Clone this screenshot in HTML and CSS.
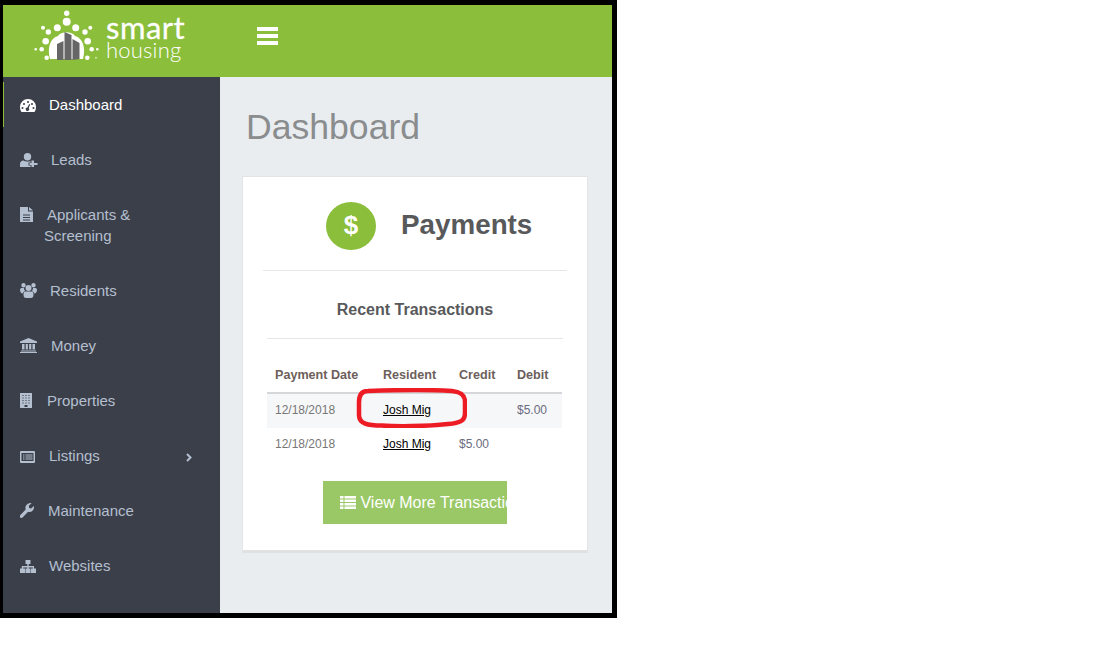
FILE: index.html
```html
<!DOCTYPE html>
<html lang="en">
<head>
    <meta charset="UTF-8">
    <title>Dashboard - Smart Housing</title>
    <link rel="stylesheet" href="styles.css">
</head>
<body>
    <div class="frame">
        <header class="topbar">
            <div class="logo">
                <svg class="logo-mark" width="66" height="52" viewBox="0 0 66 52">
                    <g fill="#fff">
                        <circle cx="33.700" cy="3.300" r="2.700"/><circle cx="33.700" cy="11.700" r="4"/>
                        <circle cx="24.300" cy="17.700" r="3.500"/><circle cx="42.700" cy="17.700" r="3.500"/>
                        <circle cx="15.300" cy="22" r="2.700"/><circle cx="52" cy="22" r="2.700"/>
                        <circle cx="10" cy="17.700" r="2"/><circle cx="57.300" cy="17.700" r="2"/>
                        <circle cx="12.700" cy="31.300" r="3.300"/><circle cx="54.700" cy="31.300" r="3.300"/>
                        <circle cx="8.700" cy="39.300" r="2.300"/><circle cx="58.700" cy="39.300" r="2.300"/>
                        <circle cx="2.700" cy="39.300" r="1.300"/><circle cx="64.300" cy="39.300" r="1.300"/>
                        <circle cx="13.700" cy="47.700" r="2.300"/><circle cx="54.300" cy="47.700" r="2.300"/>
                        <circle cx="63" cy="47.700" r="1" opacity="0.6"/>
                        <path d="M17 49C14 38 17 28 25 26 28 21 39 21 42 26 50 28 53 38 50 49z"/>
                    </g>
                    <path fill="#666" d="M24 50V34l6.500-3v19zM31.500 50V22l7 3v25zM39.500 50V29l7 4v16z"/>
                </svg>
                <div class="logo-text">
                    <span class="logo-smart">smart</span>
                    <span class="logo-housing">housing</span>
                </div>
            </div>
            <svg class="burger" width="21" height="18" viewBox="0 0 21 18">
                <path fill="#fff" d="M0 0h21v4H0zM0 7h21v4H0zM0 14h21v4H0z"/>
            </svg>
        </header>

        <div class="layout">
            <nav class="sidebar">
                <a class="nav-item active">
                    <svg class="nav-icon" width="16" height="13" viewBox="0 0 16 13"><path fill="currentColor" fill-rule="evenodd" d="M8 0a8 8 0 0 1 8 8c0 2-.6 3.600-1.500 5h-13C.6 11.600 0 10 0 8a8 8 0 0 1 8-8zM8 2a1 1 0 1 0 0 2 1 1 0 0 0 0-2zM4 4a1 1 0 1 0 0 2 1 1 0 0 0 0-2zM12 4a1 1 0 1 0 0 2 1 1 0 0 0 0-2zM2.500 8a1 1 0 1 0 0 2 1 1 0 0 0 0-2zM13.500 8a1 1 0 1 0 0 2 1 1 0 0 0 0-2zM9.200 5 7.400 8.600a1.700 1.700 0 1 0 1.300.5L10.200 5.500z"/></svg>Dashboard
                </a>
                <a class="nav-item">
                    <svg class="nav-icon" width="18" height="14" viewBox="0 0 18 14"><path fill="currentColor" d="M7.500 0a3.700 3.700 0 1 1 0 7.400 3.700 3.700 0 0 1 0-7.400zM0 14v-3c0-2.200 1.500-3.500 3.500-3.500 1 .7 2.500 1 4 1s2.500-.2 3.100-.6V9.500H8.500v3h2.100V14zM11.500 7.500H14V10h3.500v2H14v2h-2.500v-2H9.500v-2h2z"/></svg>Leads
                </a>
                <a class="nav-item">
                    <svg class="nav-icon nav-icon-mid" width="13" height="15" viewBox="0 0 13 15"><path fill="currentColor" fill-rule="evenodd" d="M0 0h8v4.500h5V15H0zM9 0l4 3.500H9zM3 7.500v1h7v-1zM3 10v1h7v-1zM3 12.500v1h7v-1z"/></svg>Applicants &amp; Screening
                </a>
                <a class="nav-item">
                    <svg class="nav-icon" width="17" height="15" viewBox="0 0 17 15"><path fill="currentColor" d="M3.500 0a2.200 2.200 0 1 1 0 4.400 2.200 2.200 0 0 1 0-4.400zM13.500 0a2.200 2.200 0 1 1 0 4.400 2.200 2.200 0 0 1 0-4.400zM8.500 2a3 3 0 1 1 0 6 3 3 0 0 1 0-6zM0 6.500C0 5.500 1 5 2.500 5H4c0 1.300.5 2.300 1.300 3C3.500 8.500 3 9.500 3 10.500 1 10.500 0 9 0 6.500zM17 6.500c0 2.500-1 4-3 4 0-1-.5-2-2.300-2.500.8-.7 1.300-1.700 1.300-3h1.500C16 5 17 5.500 17 6.500zM5.500 8.500h6c1.500 0 2 1.500 2 3.500 0 2-1 3-2.500 3H6c-1.500 0-2.500-1-2.500-3s.5-3.500 2-3.500z"/></svg>Residents
                </a>
                <a class="nav-item">
                    <svg class="nav-icon nav-icon-mid" width="17" height="15" viewBox="0 0 17 15"><path fill="currentColor" d="M8.500 0 17 3.500V5H0V3.500zM2 6h2.500v5.500H2zM5.700 6h2.200v5.500H5.700zM9.100 6h2.200v5.500H9.100zM12.500 6H15v5.500h-2.500zM1 12.500h15V13.500H1zM0 14h17v1H0z"/></svg>Money
                </a>
                <a class="nav-item">
                    <svg class="nav-icon nav-icon-wide" width="12" height="15" viewBox="0 0 12 15"><path fill="currentColor" d="M0 0h12v15H0z"/><path fill="#3b3f4a" opacity="0.55" d="M2 2v1h2V2zM5 2v1h2V2zM8 2v1h2V2zM2 4.500v1h2v-1zM5 4.500v1h2v-1zM8 4.500v1h2v-1zM2 7v1h2V7zM5 7v1h2V7zM8 7v1h2V7zM2 9.500v1h2v-1zM5 9.500v1h2v-1zM8 9.500v1h2v-1z"/><path fill="#3b3f4a" d="M4.500 12v2h3v-2z"/></svg>Properties
                </a>
                <a class="nav-item">
                    <svg class="nav-icon nav-icon-mid" width="15" height="12" viewBox="0 0 15 12"><path fill="currentColor" fill-rule="evenodd" d="M1 0h13a1 1 0 0 1 1 1v10a1 1 0 0 1-1 1H1a1 1 0 0 1-1-1V1a1 1 0 0 1 1-1zM1.500 2v8h12V2zM3 3.500h1.500v1H3zM5.500 3.500h7v1h-7zM3 5.500h1.500v1H3zM5.500 5.500h7v1h-7zM3 7.500h1.500v1H3zM5.500 7.500h7v1h-7z"/></svg>Listings
                    <svg class="nav-arrow" width="6" height="9" viewBox="0 0 6 9"><path fill="none" stroke="currentColor" stroke-width="2" d="M1 1l3.500 3.500L1 8"/></svg>
                </a>
                <a class="nav-item">
                    <svg class="nav-icon nav-icon-mid" width="14" height="15" viewBox="0 0 14 15"><path fill="currentColor" d="M10 0c.6 0 1.200.1 1.600.3L8.800 2.800l.4 2.100 2 .5L13.700 3c.2.400.3 1 .3 1.500C14 7 12 9 9.500 9c-.5 0-1-.1-1.400-.2L2.800 14.300c-.9.900-2.100.9-2.700.2-.6-.7-.5-1.800.3-2.600l5.300-5.300A4.900 4.900 0 0 1 10 0z"/></svg>Maintenance
                </a>
                <a class="nav-item">
                    <svg class="nav-icon" width="16" height="13" viewBox="0 0 16 13"><path fill="currentColor" d="M5.500 0h5v4h-1.800v2h5.300v2.500H16V13h-5V8.500h1.800v-1H8.700v1h1.800V13h-5V8.500h1.800v-1H3.200v1H5V13H0V8.500h1.800V6h5.500V4H5.500z"/></svg>Websites
                </a>
            </nav>

            <main class="content">
                <h1 class="page-title">Dashboard</h1>
                <section class="card">
                    <div class="card-head">
                        <span class="badge">$</span>
                        <h2 class="card-title">Payments</h2>
                    </div>
                    <div class="recent">
                        <h3 class="recent-title">Recent Transactions</h3>
                        <div class="table-wrap">
                            <table class="tx-table">
                                <thead>
                                    <tr><th class="col-date">Payment Date</th><th class="col-res">Resident</th><th class="col-credit">Credit</th><th>Debit</th></tr>
                                </thead>
                                <tbody>
                                    <tr class="odd"><td>12/18/2018</td><td><a class="res-link">Josh Mig</a></td><td></td><td class="money">$5.00</td></tr>
                                    <tr><td>12/18/2018</td><td><a class="res-link">Josh Mig</a></td><td class="money">$5.00</td><td></td></tr>
                                </tbody>
                            </table>
                            <svg class="highlight" width="111" height="40" viewBox="0 0 111 40"><path fill="none" stroke="#ed1c24" stroke-width="4.500" d="M12 3C40 2 80 2 96 3 106 4 109 8 109 14V25C109 33 104 35 92 36 70 38.500 40 38.500 26 37.500 12 37.500 3 36 3 27V14C3 7 6 3 12 3z"/></svg>
                        </div>
                        <a class="more-btn">
                            <svg width="16" height="13" viewBox="0 0 16 13"><path fill="#fff" d="M0 0h3.500v2.500H0zM4.500 0H16v2.500H4.500zM0 3.500h3.500V6H0zM4.500 3.500H16V6H4.500zM0 7h3.500v2.500H0zM4.500 7H16v2.500H4.500zM0 10.500h3.500V13H0zM4.500 10.500H16V13H4.500z"/></svg>
                            View More Transactions
                        </a>
                    </div>
                </section>
            </main>
        </div>
    </div>
</body>
</html>
```
FILE: styles.css
```css
body {
    margin: 0;
    background: #fff;
    font-family: "Liberation Sans", Arial, sans-serif;
}
.frame {
    width: 609px;
    height: 608px;
    border: solid #000;
    border-width: 5px 5px 5px 3px;
    display: flex;
    flex-direction: column;
    overflow: hidden;
}
.topbar {
    flex: none;
    height: 62px;
    padding-bottom: 10px;
    background: #8bbe3a;
    display: flex;
    align-items: center;
}
.logo {
    width: 217px;
    padding-left: 30px;
    box-sizing: border-box;
    display: flex;
    align-items: center;
    gap: 7px;
}
.logo-text {
    display: flex;
    flex-direction: column;
    color: #fff;
    font-family: Lato, sans-serif;
}
.logo-smart {
    font-size: 31px;
    line-height: 28px;
    letter-spacing: 0.5px;
    -webkit-text-stroke: 0.3px #fff;
}
.logo-housing {
    font-size: 22px;
    line-height: 18px;
    font-weight: 300;
    letter-spacing: 0.2px;
}
.burger {
    margin-left: 37px;
}
.layout {
    flex: 1;
    display: flex;
    min-height: 0;
}
.sidebar {
    width: 217px;
    flex: none;
    background: #3b3f4a;
    font-size: 15px;
    line-height: 21px;
}
.nav-item {
    display: block;
    position: relative;
    padding: 17px 20px 17px 41px;
    color: #b4bfcf;
}
.nav-item.active {
    color: #fff;
}
.nav-item.active::before {
    content: "";
    position: absolute;
    left: 0;
    top: 5px;
    bottom: 5px;
    width: 1px;
    background: #8bbe3a;
}
.nav-icon {
    margin-left: -24px;
    margin-right: 13px;
    vertical-align: -2px;
}
.nav-icon-mid {
    margin-right: 14px;
}
.nav-icon-wide {
    margin-right: 15px;
}
.nav-arrow {
    position: absolute;
    right: 28px;
    top: 25px;
}
.content {
    flex: 1;
    background: #e9edf0;
    padding: 0 24px 0 22px;
}
.page-title {
    margin: 29px 0 28px 4px;
    font-size: 35.6px;
    line-height: 42px;
    font-weight: 400;
    color: #8a8c8e;
}
.card {
    background: #fff;
    border: 1px solid #e2e5e8;
    border-bottom: 3px solid #dfe1e3;
    padding: 0 20px;
    height: 373px;
}
.card-head {
    height: 89px;
    padding: 4px 0 0 63px;
    border-bottom: 1px solid #e4e6e8;
    display: flex;
    align-items: center;
}
.badge {
    width: 50px;
    height: 48px;
    border-radius: 50%;
    background: #8bbe3a;
    display: flex;
    align-items: center;
    justify-content: center;
    color: #fff;
    font-size: 26px;
    font-weight: 700;
}
.card-title {
    margin: -2px 0 0 25px;
    font-size: 27.8px;
    color: #58595b;
}
.recent {
    padding: 0 4px;
}
.recent-title {
    margin: 0;
    height: 68px;
    line-height: 78px;
    box-sizing: border-box;
    border-bottom: 1px solid #e4e6e8;
    font-size: 16px;
    text-align: center;
    color: #58595b;
}
.table-wrap {
    position: relative;
    margin-top: 18px;
}
.tx-table {
    width: 295px;
    border-collapse: collapse;
    table-layout: fixed;
    font-size: 12px;
    color: #777;
}
.tx-table th {
    padding: 0 8px;
    height: 35px;
    text-align: left;
    font-size: 12.6px;
    color: #6d5f5b;
    border-bottom: 2px solid #d6d7da;
}
.col-date { width: 92px; }
.col-res { width: 60px; }
.col-credit { width: 42px; }
.tx-table td {
    padding: 0 8px 2px;
    height: 32px;
}
.odd td {
    background: #f6f7f9;
}
.res-link {
    color: #000;
    text-decoration: underline;
}
.money {
    color: #6b6b80;
}
.highlight {
    position: absolute;
    left: 89px;
    top: 31px;
}
.more-btn {
    display: block;
    width: 184px;
    height: 43px;
    box-sizing: border-box;
    margin: 19px 0 0 56px;
    padding-left: 17px;
    background: #9ac866;
    color: #fff;
    font-size: 16px;
    line-height: 43px;
    white-space: nowrap;
    overflow: hidden;
}
.more-btn svg {
    vertical-align: -1px;
}
```
